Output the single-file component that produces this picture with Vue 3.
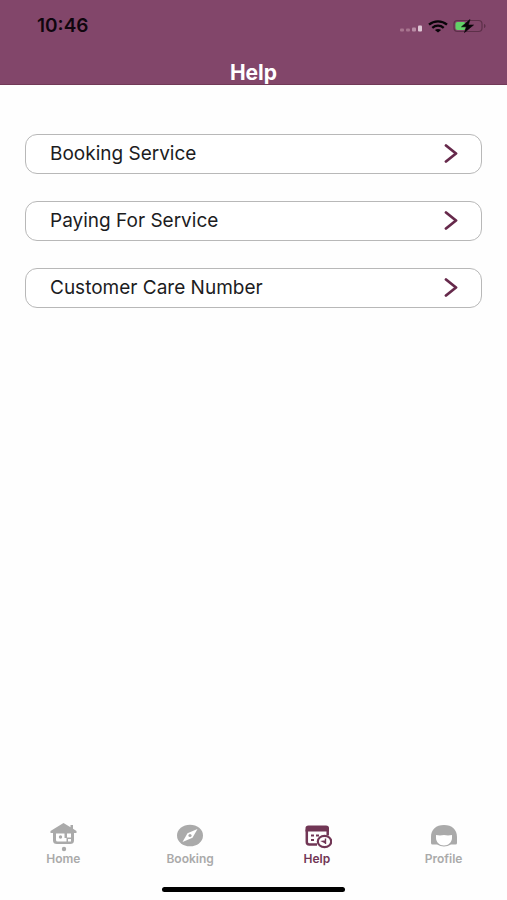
<script setup>
import { ref } from 'vue'

const topics = ['Booking Service', 'Paying For Service', 'Customer Care Number']
const tabs = [
  { id: 'home', label: 'Home' },
  { id: 'booking', label: 'Booking' },
  { id: 'help', label: 'Help' },
  { id: 'profile', label: 'Profile' },
]
const active = ref('help')
</script>

<template>
  <div class="screen">
    <header class="header">
      <div class="status">
        <span class="time">10:46</span>
        <div class="indicators">
          <svg class="signal" width="24" height="10" viewBox="0 0 24 10" aria-hidden="true">
            <rect x="1" y="5.500" width="4" height="3" rx="1" fill="#a8758f" />
            <rect x="7" y="5.500" width="4" height="3" rx="1" fill="#a8758f" />
            <rect x="13" y="4.500" width="4" height="4" rx="1" fill="#b88ca5" />
            <rect x="19" y="2.500" width="4" height="6" rx="1" fill="#dfc8d6" />
          </svg>
          <svg class="wifi" width="20" height="13" viewBox="0 0 20 13" aria-hidden="true">
            <g fill="none" stroke="#080408" stroke-width="2.3">
              <path d="M1 4.6C6 .2 14 .2 19 4.6" />
              <path d="M4.3 7.8C7.6 4.9 12.4 4.9 15.7 7.8" />
            </g>
            <path d="M10 12.6 6.9 10.1C8.7 8.6 11.3 8.6 13.1 10.1Z" fill="#080408" />
          </svg>
          <svg class="battery" width="34" height="14" viewBox="0 0 34 14" aria-hidden="true">
            <rect x="1" y="1.5" width="28" height="11" rx="3.5" fill="none" stroke="#5d3049" stroke-width="1.2" />
            <path d="M31 5c2 .4 2 3.600 0 4Z" fill="#5d3049" />
            <rect x="2.500" y="3" width="10" height="8" rx="2" fill="#62d267" />
            <path d="M17 .5 8.500 7.800h5L11.500 13.500 20.500 6h-5.200Z" fill="#080408" stroke="#080408" stroke-width=".6" />
          </svg>
        </div>
      </div>
      <h1 class="title">Help</h1>
    </header>

    <main class="topics">
      <button v-for="topic in topics" :key="topic" type="button" class="topic">
        <span>{{ topic }}</span>
        <svg width="16" height="20" viewBox="0 0 16 20" aria-hidden="true">
          <path d="M3 1.500 13 9.500 3 17.500" fill="none" stroke="#66294b" stroke-width="2.800" stroke-linecap="round" stroke-linejoin="round" />
        </svg>
      </button>
    </main>

    <nav class="tabs" aria-label="Main">
      <button
        v-for="tab in tabs"
        :key="tab.id"
        type="button"
        class="tab"
        :class="{ active: active === tab.id }"
        @click="active = tab.id"
      >
        <svg v-if="tab.id === 'home'" width="30" height="30" viewBox="0 0 30 30" aria-hidden="true">
          <path d="M15.500 1 2.500 9v2h2.500V18.500q0 3.500 4 3.500h13q4 0 4-3.500V11h2.500V9L25 6.800V3h-2.500v2.200Z" fill="currentColor" />
          <path d="M8 11.500h8.500v4.500h2v3.500H9.500q-1.500 0-1.500-1.500Z" fill="#fff" />
          <path d="M19 11.500h4v4h-4ZM20 17h3v2.500h-3Z" fill="#fff" />
          <circle cx="12.500" cy="15" r="1.700" fill="currentColor" />
          <circle cx="16" cy="27" r="2.200" fill="currentColor" />
        </svg>
        <svg v-else-if="tab.id === 'booking'" width="30" height="30" viewBox="0 0 30 30" aria-hidden="true">
          <ellipse cx="15" cy="13.500" rx="13" ry="10.800" fill="currentColor" />
          <path d="M22.500 7 17.500 15.800 7.500 20 12.500 11.200Z" fill="#fff" />
          <circle cx="15" cy="13.500" r="1.600" fill="currentColor" />
        </svg>
        <svg v-else-if="tab.id === 'help'" width="30" height="30" viewBox="0 0 30 30" aria-hidden="true">
          <path d="M6.500 3.500h17.500q3 0 3 2.500V9.500H3.500V6Q3.500 3.500 6.500 3.500Z" fill="currentColor" />
          <path d="M4.800 7.500v12.500q0 2.500 2.500 2.500H15M25.700 8.500v5" fill="none" stroke="currentColor" stroke-width="2.500" />
          <path d="M9 12.500h3v2H9ZM14 12.500h3v2h-3ZM9 17h3v2H9Z" fill="currentColor" />
          <ellipse cx="22.500" cy="19.500" rx="6.700" ry="5.700" fill="#fff" stroke="currentColor" stroke-width="2.200" />
          <path d="M23.500 16.500v5.500M23.500 19l-3 .4 3 1.600" fill="none" stroke="currentColor" stroke-width="1.400" />
        </svg>
        <svg v-else width="30" height="30" viewBox="0 0 30 30" aria-hidden="true">
          <path d="M3.500 22.500Q2 22.500 2 21V15C2 7.500 7 3 15 3S28 7.500 28 15v6q0 1.500-1.500 1.500H22Q15 26.500 8 22.500Z" fill="currentColor" />
          <path d="M7 13Q11 13.800 15 13 19 13.800 23 13v3C23 20 19.500 23.500 15 23.500S7 20 7 16Z" fill="#fff" />
        </svg>
        <span>{{ tab.label }}</span>
      </button>
    </nav>
    <div class="home-indicator"></div>
  </div>
</template>

<style>
body {
  margin: 0;
  background: #fefefe;
}
</style>

<style scoped>
.screen {
  display: flex;
  flex-direction: column;
  min-height: 100vh;
  font-family: Inter, "Liberation Sans", sans-serif;
  color: #1c1c1e;
}

.header {
  background: #82466a;
  border-bottom: 1px solid #713957;
}

.status {
  display: flex;
  align-items: center;
  justify-content: space-between;
  height: 52px;
  padding: 0 20px 0 37px;
}

.time {
  font-size: 19px;
  font-weight: 600;
  line-height: 24px;
  color: #10060e;
}

.indicators {
  display: flex;
  align-items: center;
  gap: 5px;
}

.signal {
  margin-top: 4px;
}

.title {
  margin: 0;
  padding: 9px 0 0;
  font-size: 21px;
  font-weight: 700;
  line-height: 23px;
  text-align: center;
  color: #fff;
}

.topics {
  display: flex;
  flex: 1;
  flex-direction: column;
  gap: 27px;
  padding: 49px 25px;
}

.topic {
  display: flex;
  align-items: center;
  justify-content: space-between;
  height: 40px;
  padding: 0 22px 0 24px;
  border: 1px solid #b8b8b8;
  border-radius: 12px;
  background: #fff;
  font-family: inherit;
  font-size: 19px;
  line-height: 24px;
  color: inherit;
}

.tabs {
  display: grid;
  grid-template-columns: repeat(4, 1fr);
}

.tab {
  display: flex;
  flex-direction: column;
  align-items: center;
  padding: 0;
  border: 0;
  background: none;
  font-family: inherit;
  font-size: 12px;
  font-weight: 600;
  line-height: 14px;
  color: #aaa;
}

.tab.active {
  color: #713655;
}

.home-indicator {
  align-self: center;
  width: 36%;
  height: 5px;
  margin: 21px 0 8px;
  border-radius: 3px;
  background: #000;
}
</style>
